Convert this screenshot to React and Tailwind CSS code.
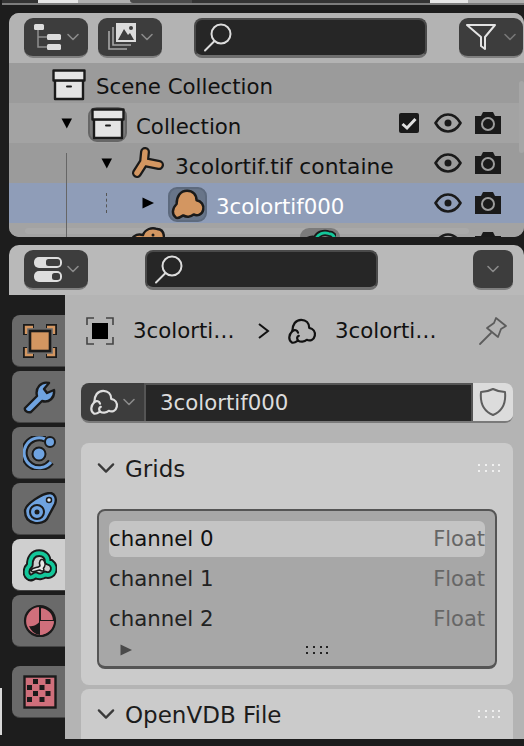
import React from "react";

const OUTLINE = "#1a1a1a";
const ORANGE = "#d39661";
const BLUE = "#6fa3e0";
const TEAL = "#13c79a";
const PINK = "#cf6f7b";
const CLOUD = "M7 34C3 31 3 25 8 20C8 12 12 6 19 6C25 6 29 10 29 16C34 17 37 21 36 26C35 31 30 33 26 31C23 34 18 34 15 32C12 34 9 36 7 34Z";
const META = "M1 20C1 13 6 9 13 11C15 5 22 3 27 5C32 5 34 9 34 14V24H1Z";

function Chevron({ color = "#8a8a8a", size = 14 }) {
  return (
    <svg width={size} height={size} viewBox="0 0 14 14" fill="none" stroke={color} strokeWidth="1.6" strokeLinecap="round" strokeLinejoin="round">
      <path d="M2 4.5L7 9.5L12 4.5" />
    </svg>
  );
}

function Triangle({ dir = "down", color = "#000" }) {
  return (
    <svg width="14" height="14" viewBox="0 0 14 14" fill={color}>
      {dir === "down" ? <path d="M1.5 2.5H12L6.8 12.5Z" /> : <path d="M1.5 1.5L13 7L1.5 12.5Z" />}
    </svg>
  );
}

function Grip({ color }) {
  return (
    <svg width="22" height="10" viewBox="0 0 22 10" fill={color}>
      {[0, 7, 14, 20].map((x) => (
        <React.Fragment key={x}>
          <rect x={x} y="1" width="2" height="2" />
          <rect x={x} y="7" width="2" height="2" />
        </React.Fragment>
      ))}
    </svg>
  );
}

function SearchIcon() {
  return (
    <svg width="30" height="30" viewBox="0 0 30 30" fill="none" stroke="#dcdcdc" strokeWidth="2" strokeLinecap="round">
      <circle cx="18" cy="11" r="9.5" />
      <path d="M11.5 18L2 27.5" />
    </svg>
  );
}

function BoxIcon() {
  return (
    <svg width="34" height="32" viewBox="0 0 34 32" fill="#e4e4e4" stroke={OUTLINE} strokeWidth="2.4" strokeLinejoin="round">
      <rect x="3" y="11" width="28" height="19" />
      <rect x="1.5" y="1.5" width="31" height="10" />
      <rect x="14" y="16.5" width="6" height="2" fill={OUTLINE} stroke="none" rx="1" />
    </svg>
  );
}

function EmptyIcon() {
  const d = "M13 5L12 15M12 15L27 18M12 15L5 26";
  return (
    <svg width="32" height="32" viewBox="0 0 32 32" fill="none" strokeLinecap="round" strokeLinejoin="round">
      <path d={d} stroke={OUTLINE} strokeWidth="10" />
      <path d={d} stroke={ORANGE} strokeWidth="5.5" />
    </svg>
  );
}

function CloudFill({ fill = ORANGE, size = 40 }) {
  return (
    <svg className="shrink-0" width={size} height={size} viewBox="0 0 40 40" fill={fill} stroke={OUTLINE} strokeWidth="2.6" strokeLinejoin="round">
      <path d={CLOUD} />
    </svg>
  );
}

function CloudLine({ color, size = 32 }) {
  return (
    <svg width={size} height={size} viewBox="0 0 40 40" fill="none" stroke={color} strokeWidth="2.8" strokeLinecap="round" strokeLinejoin="round">
      <path d={CLOUD} />
      <path d="M8 20C11 18 14 19 15 22M15 32C13 29 14 27 16 26" />
    </svg>
  );
}

function EyeIcon() {
  return (
    <svg width="28" height="22" viewBox="0 0 28 22" fill="none">
      <path d="M1.5 11C5 5 9 2.5 14 2.5S23 5 26.5 11C23 17 19 19.5 14 19.5S5 17 1.5 11Z" stroke={OUTLINE} strokeWidth="2.6" strokeLinejoin="round" />
      <circle cx="14" cy="11" r="3.5" fill={OUTLINE} />
    </svg>
  );
}

function CameraIcon() {
  return (
    <svg width="28" height="24" viewBox="0 0 28 24">
      <path d="M1 5H7L9 1H19L21 5H27V23H1Z" fill={OUTLINE} />
      <circle cx="14" cy="13" r="6" fill="none" stroke="#9c9c9c" strokeWidth="2" />
    </svg>
  );
}

function CheckIcon() {
  return (
    <svg width="20" height="20" viewBox="0 0 20 20" fill="none">
      <rect width="20" height="20" rx="2" fill={OUTLINE} />
      <path d="M3.5 11L8 15L16.5 6" stroke="#e0e0e0" strokeWidth="3" />
    </svg>
  );
}

function RowIcons({ check }) {
  return (
    <div className="relative ml-auto flex items-center">
      {check && <div className="mr-[9px] flex"><CheckIcon /></div>}
      <div className="flex w-[40px] justify-center"><EyeIcon /></div>
      <div className="mr-[16px] flex w-[40px] justify-center"><CameraIcon /></div>
    </div>
  );
}

function IconBox({ tone, children }) {
  return (
    <div className={`flex h-[35px] w-[39px] items-center justify-center rounded-[9px] ${tone}`}>{children}</div>
  );
}

function HeaderButton({ width = "w-[64px]", gap = "gap-[3px]", children }) {
  return (
    <div className={`flex h-[40px] ${width} items-center justify-center ${gap} rounded-[9px] border-b-2 border-[#808080] bg-[#3d3d3d]`}>
      {children}
    </div>
  );
}

function SearchField({ width }) {
  return (
    <div className={`flex h-[40px] ${width} items-center rounded-[8px] border-2 border-b-[3px] border-[#4a4a4a] border-b-[#6e6e6e] bg-[#262626] pl-[7px]`}>
      <SearchIcon />
    </div>
  );
}

function Tab({ active, mt = "mt-[4px]", children }) {
  return (
    <div className={`${mt} flex h-[52px] items-center justify-center rounded-l-[8px] border-b border-[#454545] pl-[2px] ${active ? "bg-[#cfcfcf]" : "bg-[#6a6a6a]"}`}>
      {children}
    </div>
  );
}

function Section({ title, className, children }) {
  return (
    <div className={`rounded-t-[8px] bg-[#cbcbcb] ${className}`}>
      <div className="flex h-[50px] items-center pl-[15px] pr-[13px]">
        <Chevron color="#3a3a3a" size={20} />
        <span className="ml-[9px] mt-[3px] text-[23px] text-[#1c1c1c]">{title}</span>
        <div className="ml-auto flex"><Grip color="#f0f0f0" /></div>
      </div>
      {children}
    </div>
  );
}

function ChannelRow({ name, active }) {
  return (
    <div className={`flex h-[36px] items-center rounded-[6px] ${active ? "bg-[#c4c4c4] text-[#111]" : "text-[#222]"}`}>
      <span>{name}</span>
      <span className="ml-auto text-[21px] text-[#666]">Float</span>
    </div>
  );
}

export default function App() {
  return (
    <div className="flex h-[746px] w-[524px] overflow-hidden bg-[#1d1d1d] text-[21.3px] leading-none [font-family:'DejaVu_Sans',sans-serif]">
      <div className="flex w-[2px] flex-col">
        <div className="h-[688px]" />
        <div className="h-[47px] bg-[#d8d8d8]" />
      </div>
      <div className="flex min-w-0 flex-1 flex-col">
        {/* sliver of the editor above */}
        <div className="flex h-[5px] w-[522px] border-b-2 border-[#7c7c7c] bg-[#b0b0b0]">
          <div className="w-[36px] bg-[#333]" />
          <div className="w-[40px] bg-[#e6e6e6]" />
          <div className="w-[38px] rounded-br-[6px] bg-[#b0b0b0]" />
          <div className="ml-[14px] w-[62px] rounded-bl-[6px] bg-[#4a4a4a]" />
          <div className="w-[238px] bg-[#333]" />
          <div className="w-[38px] bg-[#e6e6e6]" />
          <div className="w-[38px] bg-[#b0b0b0]" />
        </div>

        {/* outliner */}
        <div className="relative ml-[7px] mt-[8px] h-[224px] overflow-hidden rounded-[10px] bg-[#9d9d9d]">
          <div className="flex h-[50px] items-center gap-[10px] bg-[#b3b3b3] pl-[15px]">
            <HeaderButton>
              <svg width="30" height="30" viewBox="0 0 30 30" fill="#dcdcdc">
                <rect x="1" y="2" width="10" height="6" rx="1.5" />
                <rect x="14" y="12" width="14" height="6" rx="1.5" />
                <rect x="14" y="22" width="14" height="6" rx="1.5" />
                <path d="M5 8V25H14M5 15H14" fill="none" stroke="#8f8f8f" strokeWidth="1.5" />
              </svg>
              <Chevron />
            </HeaderButton>
            <HeaderButton>
              <svg width="30" height="30" viewBox="0 0 30 30" fill="none">
                <rect x="9" y="1" width="20" height="19" fill="#dcdcdc" />
                <path d="M11 18L17 7L21 13L23 11L27 18Z" fill="#3d3d3d" />
                <circle cx="24" cy="6" r="2" fill="#3d3d3d" />
                <path d="M6 5V23H24M2 9V27H20" stroke="#a8a8a8" strokeWidth="1.6" />
              </svg>
              <Chevron />
            </HeaderButton>
            <div className="ml-[22px]"><SearchField width="w-[233px]" /></div>
            <div className="ml-[22px]">
              <HeaderButton gap="gap-[7px]">
                <svg width="30" height="30" viewBox="0 0 30 30" fill="none" stroke="#e4e4e4" strokeWidth="2" strokeLinejoin="round">
                  <path d="M1 3H29L19 15V27L15 24V15Z" />
                </svg>
                <Chevron color="#777" />
              </HeaderButton>
            </div>
          </div>

          <div className="flex h-[40px] items-center bg-[#9b9b9b] pl-[43px] text-[#111]">
            <div className="mt-[4px] flex"><BoxIcon /></div>
            <span className="ml-[10px] mt-[7px]">Scene Collection</span>
          </div>
          <div className="flex h-[40px] items-center bg-[#a3a3a3] pl-[51px] text-[#111]">
            <Triangle />
            <div className="ml-[14px] mt-[2px]">
              <IconBox tone="bg-[#7b7b7b] border-2 border-[#666]"><BoxIcon /></IconBox>
            </div>
            <span className="ml-[9px] mt-[7px]">Collection</span>
            <RowIcons check />
          </div>
          <div className="flex h-[40px] items-center bg-[#9b9b9b] pl-[91px] text-[#111]">
            <Triangle />
            <div className="ml-[18px] flex"><EmptyIcon /></div>
            <span className="ml-[11px] mt-[7px] whitespace-nowrap text-[21.8px]">3colortif.tif containe</span>
            <RowIcons />
          </div>
          <div className="flex h-[40px] items-center bg-[#8f9db8] pl-[132px] text-white">
            <Triangle dir="right" />
            <div className="ml-[13px] mt-[2px]">
              <IconBox tone="bg-[#687589] border-2 border-[#5d6a7e]"><CloudFill size={38} /></IconBox>
            </div>
            <span className="ml-[9px] mt-[7px]">3colortif000</span>
            <RowIcons />
          </div>
          <div className="relative flex h-[40px] items-center bg-[#a3a3a3] pl-[121px]">
            <div className="absolute left-[16px] top-[5px] h-[6px] w-[444px] rounded-full bg-[#a9a9a9]" />
            <svg className="relative mb-[15px] shrink-0" width="35" height="24" viewBox="0 0 35 24" fill={ORANGE} stroke={OUTLINE} strokeWidth="2.4" strokeLinejoin="round">
              <path d={META} />
              <circle cx="23" cy="11" r="1.5" fill={OUTLINE} stroke="none" />
            </svg>
            <div className="relative ml-[135px] mt-[4px] flex h-[35px] w-[40px] shrink-0 justify-center rounded-[9px] bg-[#7b7b7b]">
              <svg width="32" height="24" viewBox="0 0 35 24" fill="none" strokeLinejoin="round">
                <path d={META} stroke={OUTLINE} strokeWidth="7" />
                <path d={META} stroke={TEAL} strokeWidth="3" />
              </svg>
            </div>
            <RowIcons />
          </div>

          <div className="absolute bottom-0 left-[57px] top-[140px] w-px bg-[#666]" />
          <div className="absolute left-[97px] top-[180px] h-[20px] w-px border-l border-dashed border-[#555]" />
          <div className="absolute right-0 top-[68px] h-[72px] w-[5px] rounded-full bg-[#a6a6a6]" />
        </div>

        {/* properties */}
        <div className="ml-[7px] mt-[8px] flex h-[494px] flex-col overflow-hidden rounded-t-[10px]">
          <div className="flex h-[50px] shrink-0 items-center bg-[#b9b9b9] pl-[15px]">
            <HeaderButton>
              <svg width="30" height="30" viewBox="0 0 30 30">
                <rect x="1" y="3" width="28" height="11" rx="5" fill="#dedede" />
                <rect x="13" y="5" width="14" height="7" rx="2.5" fill="#3d3d3d" />
                <rect x="1" y="17" width="28" height="11" rx="5" fill="#dedede" />
                <rect x="19" y="19" width="8" height="7" rx="2.5" fill="#3d3d3d" />
              </svg>
              <Chevron />
            </HeaderButton>
            <div className="ml-[57px]"><SearchField width="w-[233px]" /></div>
            <div className="ml-[95px] flex h-[40px] w-[40px] items-center justify-center rounded-[8px] border-b-2 border-[#808080] bg-[#3d3d3d]">
              <Chevron color="#8a8a8a" />
            </div>
          </div>

          <div className="flex min-h-0 flex-1">
            <div className="w-[56px] shrink-0 bg-[#1d1d1d] pl-[3px] pt-[20px]">
              <Tab mt="mt-0">
                <svg width="34" height="34" viewBox="0 0 34 34">
                  <path d="M2 11V2H11M23 2H32V11M32 23V32H23M11 32H2V23" fill="none" stroke={OUTLINE} strokeWidth="4" />
                  <path d="M3 10V3H10M24 3H31V10M31 24V31H24M10 31H3V24" fill="none" stroke={ORANGE} strokeWidth="2.4" />
                  <rect x="7" y="7" width="20" height="20" fill={ORANGE} stroke={OUTLINE} strokeWidth="2.6" />
                </svg>
              </Tab>
              <Tab>
                <svg width="34" height="34" viewBox="0 0 34 34" strokeLinejoin="round">
                  <path d="M2 28L14 16C12 8 18 1 26 3L21 9L24 13L31 10C32 18 26 23 19 21L8 32C5 33 1 31 2 28Z" fill={BLUE} stroke={OUTLINE} strokeWidth="2.4" />
                </svg>
              </Tab>
              <Tab>
                <svg width="34" height="34" viewBox="0 0 34 34" fill="none">
                  <path d="M28 26A15 15 0 1 1 22 3" stroke={OUTLINE} strokeWidth="7" />
                  <path d="M28 26A15 15 0 1 1 22 3" stroke={BLUE} strokeWidth="3" />
                  <circle cx="16" cy="18" r="6.5" fill={BLUE} stroke={OUTLINE} strokeWidth="2" />
                  <circle cx="27" cy="6" r="5" fill={BLUE} stroke={OUTLINE} strokeWidth="2" />
                </svg>
              </Tab>
              <Tab>
                <svg width="34" height="34" viewBox="0 0 34 34">
                  <path d="M2 19C2 12 20 1 27 1C32 1 34 7 32 12L24 27C20 33 2 34 2 19Z" fill={BLUE} stroke={OUTLINE} strokeWidth="2.4" />
                  <circle cx="14" cy="20" r="7" fill="none" stroke={OUTLINE} strokeWidth="2" />
                  <circle cx="14" cy="20" r="2.5" fill={OUTLINE} />
                  <circle cx="26" cy="8" r="2.5" fill="#dfe9f5" stroke={OUTLINE} strokeWidth="1.5" />
                </svg>
              </Tab>
              <Tab active>
                <svg width="34" height="34" viewBox="0 0 40 40" fill="none" strokeLinejoin="round">
                  <path d={CLOUD} fill="#cfcfcf" stroke={OUTLINE} strokeWidth="9" />
                  <path d={CLOUD} stroke={TEAL} strokeWidth="4.5" />
                  <path d="M9 26C13 22 17 24 20 21C18 16 21 12 24 14C27 18 26 22 24 24C26 27 22 28 20 26C17 26 14 28 11 28Z" fill="#e8e8e8" stroke={OUTLINE} strokeWidth="1.8" />
                </svg>
              </Tab>
              <Tab>
                <svg width="34" height="34" viewBox="0 0 34 34">
                  <circle cx="17" cy="17" r="15" fill={PINK} stroke={OUTLINE} strokeWidth="2.2" />
                  <path d="M17 3V17H31A14 14 0 0 0 17 3Z" fill={PINK} stroke={OUTLINE} strokeWidth="2" />
                  <path d="M6 22C11 23 15 20 17 17V31A14 14 0 0 1 6 22Z" fill={OUTLINE} />
                  <path d="M31 17C30 24 24 30 17 31V17Z" fill={PINK} />
                </svg>
              </Tab>
              <Tab mt="mt-[19px]">
                <svg width="34" height="34" viewBox="0 0 34 34">
                  <rect x="1.5" y="1.5" width="31" height="31" fill={PINK} stroke={OUTLINE} strokeWidth="2.4" />
                  {[[12.5, 6.5], [25, 6.5], [6.5, 12.5], [19, 12.5], [12.5, 18.5], [25, 18.5], [6.5, 24.5], [19, 24.5]].map(([x, y]) => (
                    <rect key={`${x}-${y}`} x={x - 2.5} y={y - 2.5} width="5" height="5" fill={OUTLINE} />
                  ))}
                </svg>
              </Tab>
            </div>

            <div className="min-w-0 flex-1 bg-[#b4b4b4] pl-[16px] pr-[11px]">
              <div className="flex h-[72px] items-center text-[#111]">
                <svg className="ml-[5px]" width="28" height="28" viewBox="0 0 28 28" fill="none">
                  <path d="M1 8V1H8M20 1H27V8M27 20V27H20M8 27H1V20" stroke="#444" strokeWidth="1.6" />
                  <rect x="6" y="6" width="16" height="16" fill="#000" />
                </svg>
                <span className="ml-[19px] w-[104px] whitespace-nowrap">3colorti…</span>
                <svg className="ml-[20px]" width="14" height="18" viewBox="0 0 14 18" fill="none" stroke="#111" strokeWidth="2">
                  <path d="M2 2L11 9L2 16" />
                </svg>
                <div className="ml-[15px] flex"><CloudLine color="#111" /></div>
                <span className="ml-[17px] w-[104px] whitespace-nowrap">3colorti…</span>
                <svg className="ml-[39px]" width="30" height="30" viewBox="0 0 30 30" fill="none" stroke="#5c5c5c" strokeWidth="1.8" strokeLinejoin="round" strokeLinecap="round">
                  <path d="M18 2L28 10L23 13L20 21L9 12L16 7Z" />
                  <path d="M13 17L2 28" />
                </svg>
              </div>

              <div className="mt-[16px] flex h-[40px] overflow-hidden rounded-[8px] border-b-2 border-[#7a7a7a]">
                <div className="flex w-[63px] items-center gap-[2px] bg-[#3d3d3d] pl-[7px]">
                  <CloudLine color="#dedede" />
                  <Chevron />
                </div>
                <div className="flex flex-1 items-center border-x-2 border-t-2 border-[#555] bg-[#262626] pl-[14px] text-[#dcdcdc]">3colortif000</div>
                <div className="flex w-[40px] items-center justify-center bg-[#dcdcdc]">
                  <svg width="28" height="30" viewBox="0 0 28 30" fill="none" stroke="#5e5e5e" strokeWidth="2" strokeLinejoin="round">
                    <path d="M14 2C18 4 22 5 26 5C27 15 24 24 14 28C4 24 1 15 2 5C6 5 10 4 14 2Z" />
                  </svg>
                </div>
              </div>

              <Section title="Grids" className="mt-[20px] h-[242px] rounded-b-[8px]">
                <div className="ml-[16px] mt-[16px] h-[160px] w-[400px] rounded-[8px] border-2 border-b-[3px] border-[#555] bg-[#a7a7a7] px-[10px] pt-[10px]">
                  <ChannelRow name="channel 0" active />
                  <div className="mt-[4px]"><ChannelRow name="channel 1" /></div>
                  <div className="mt-[4px]"><ChannelRow name="channel 2" /></div>
                  <div className="mt-[6px] flex items-center pl-[10px]">
                    <Triangle dir="right" color="#4a4a4a" />
                    <div className="ml-[173px] flex"><Grip color="#222" /></div>
                  </div>
                </div>
              </Section>

              <Section title="OpenVDB File" className="mt-[4px] h-[50px]" />
            </div>
          </div>
        </div>
      </div>
    </div>
  );
}
